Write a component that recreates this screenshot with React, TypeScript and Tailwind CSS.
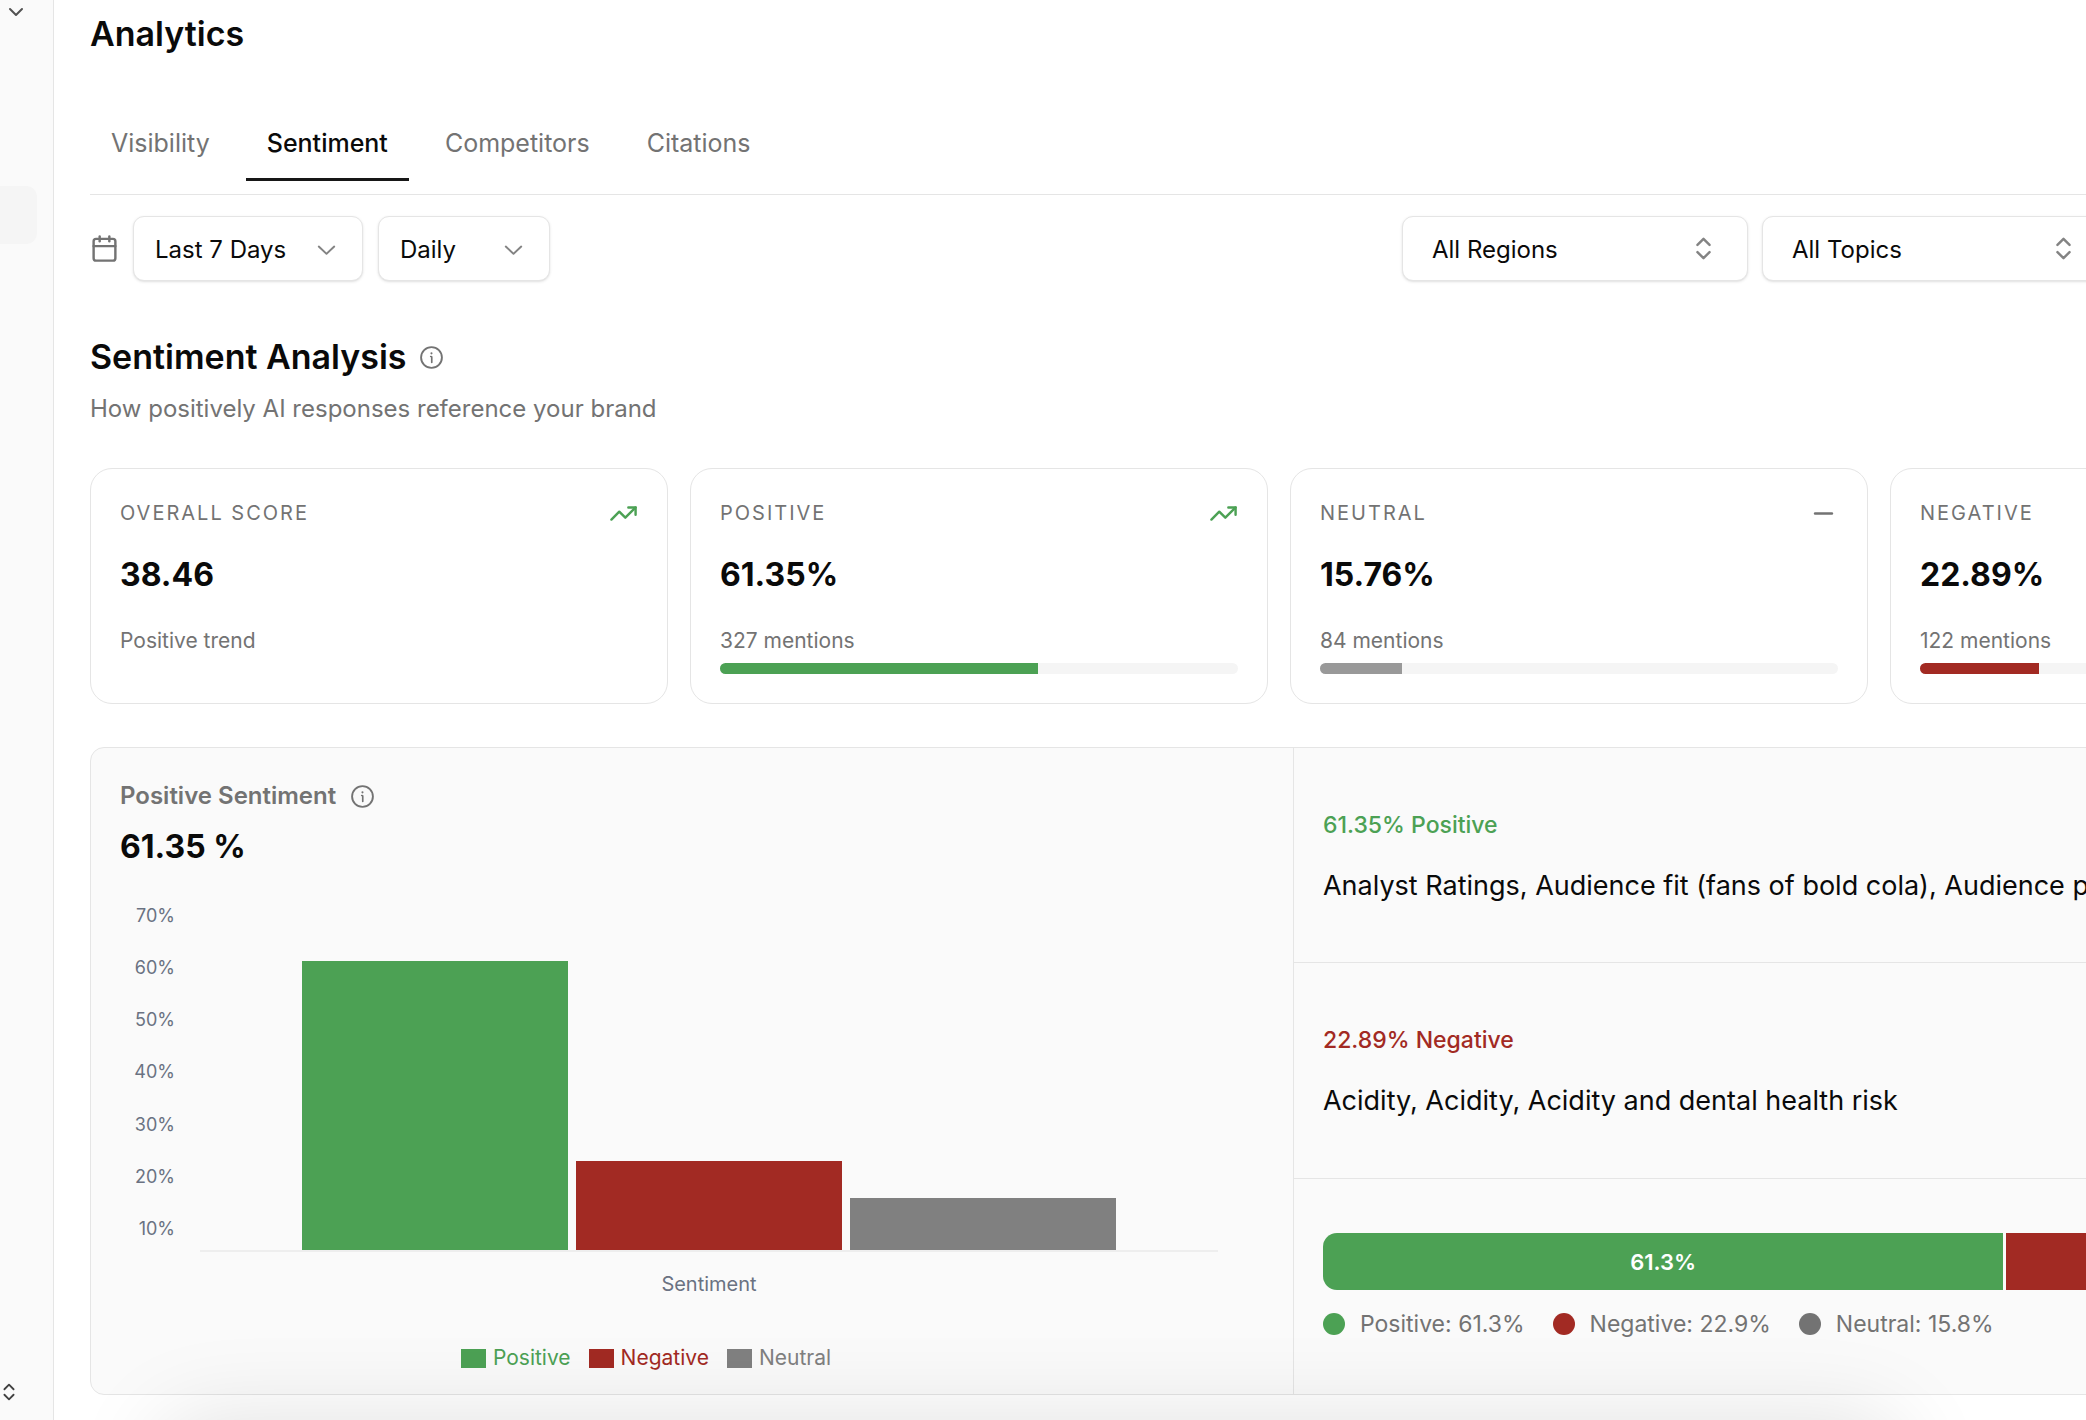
import React, { useState } from 'react';
import { Calendar, ChevronDown, ChevronsUpDown, Minus, TrendingUp } from 'lucide-react';

const TABS = ['Visibility', 'Sentiment', 'Competitors', 'Citations'];
const TICKS = ['70%', '60%', '50%', '40%', '30%', '20%', '10%'];

// the y axis starts a little above zero
const AXIS_MIN = 5.75;
const AXIS_MAX = 70;

type Series = {
  name: string;
  value: number;
  short: string;
  bg: string;
  text: string;
};

const SERIES: Series[] = [
  { name: 'Positive', value: 61.35, short: '61.3%', bg: 'bg-[#4ca154]', text: 'text-[#4ca154]' },
  { name: 'Negative', value: 22.89, short: '22.9%', bg: 'bg-[#a22a23]', text: 'text-[#a22a23]' },
  { name: 'Neutral', value: 15.76, short: '15.8%', bg: 'bg-[#808080]', text: 'text-[#808080]' },
];

function InfoIcon() {
  return (
    <svg
      viewBox="0 0 24 24"
      className="size-[25px] text-[#737373]"
      fill="none"
      stroke="currentColor"
      strokeLinecap="round"
      strokeLinejoin="round"
    >
      <circle cx="12" cy="12" r="10" strokeWidth="1.8" />
      <path d="M12.24 16.8V12c0-.47 0-.7-.15-.85-.14-.15-.38-.15-.85-.15" strokeWidth="1.6" />
      <path d="M11.99 8H12" strokeWidth="2" />
    </svg>
  );
}

function SmallChevron() {
  return (
    <svg viewBox="0 0 15 15" className="pointer-events-none absolute right-[22px] size-[29px] opacity-50" fill="currentColor">
      <path d="M3.135 6.158a.5.5 0 0 1 .707-.023L7.5 9.565l3.658-3.43a.5.5 0 0 1 .684.73l-4 3.75a.5.5 0 0 1-.684 0l-4-3.75a.5.5 0 0 1-.023-.707Z" />
    </svg>
  );
}

function PeriodSelect({ label, options, className }: { label: string; options: string[]; className: string }) {
  return (
    <div className={`relative flex items-center ${className}`}>
      <select
        aria-label={label}
        className="h-[65px] w-full appearance-none rounded-[11px] border border-neutral-200 bg-white pt-0.5 pl-[21px] text-2xl shadow-sm"
      >
        {options.map((o) => (
          <option key={o}>{o}</option>
        ))}
      </select>
      <SmallChevron />
    </div>
  );
}

function FilterSelect({ label }: { label: string }) {
  return (
    <div className="relative flex items-center">
      <select
        aria-label={label}
        className="h-[65px] w-full appearance-none rounded-[11px] border border-neutral-200 bg-white pt-0.5 pl-[29px] text-2xl shadow-sm"
      >
        <option>{label}</option>
      </select>
      <ChevronsUpDown className="pointer-events-none absolute right-[30px] size-[29px] opacity-50" />
    </div>
  );
}

type CardProps = {
  title: string;
  value: string;
  note: string;
  icon: React.ReactNode;
  percent?: number;
  bar?: string;
};

function StatCard({ title, value, note, icon, percent, bar }: CardProps) {
  return (
    <div className="h-[236px] rounded-[22px] border border-neutral-200 bg-white px-[29px] pt-7">
      <div className="flex h-8 items-center justify-between">
        <h3 className="text-xl tracking-widest text-[#737373] uppercase">{title}</h3>
        {icon}
      </div>
      <p className="mt-6 text-[32px] leading-11 font-bold">{value}</p>
      <p className="mt-7 text-[21px] leading-8 text-[#737373]">{note}</p>
      {percent !== undefined && (
        <div className="mt-[6px] h-[11px] overflow-hidden rounded-full bg-neutral-100">
          <div className={`h-full ${bar}`} style={{ width: `${percent}%` }} />
        </div>
      )}
    </div>
  );
}

function BarChart() {
  return (
    <div className="mt-[47px] pr-[46px]">
      <div className="flex">
        <div className="-mt-[14px] flex h-[341px] w-[55px] flex-col justify-between text-right text-lg leading-7 text-gray-500">
          {TICKS.map((t) => (
            <span key={t}>{t}</span>
          ))}
        </div>
        <div className="ml-[25px] h-[336px] flex-1 border-b-2 border-[#eeeeee]">
          <div className="mx-auto flex h-full w-4/5 items-end gap-2">
            {SERIES.map((s) => (
              <div
                key={s.name}
                className={`flex-1 ${s.bg}`}
                style={{ height: `${((s.value - AXIS_MIN) / (AXIS_MAX - AXIS_MIN)) * 100}%` }}
              />
            ))}
          </div>
        </div>
      </div>
      <p className="mt-[18px] ml-20 text-center text-xl leading-7 text-gray-500">Sentiment</p>
    </div>
  );
}

export default function App() {
  const [tab, setTab] = useState('Sentiment');

  return (
    <div className="relative flex h-screen overflow-hidden bg-white font-['Inter',sans-serif] text-[#0a0a0a]">
      <aside className="flex w-[54px] shrink-0 flex-col items-start border-r border-neutral-200 bg-neutral-50">
        <button aria-label="Switch workspace" className="ml-1 text-[#525252]">
          <ChevronDown className="size-6" />
        </button>
        <button aria-label="Analytics" className="mt-[162px] h-[58px] w-[37px] rounded-r-[11px] bg-neutral-100" />
        <button aria-label="Account menu" className="mt-auto mb-[17px] -ml-[2px] text-[#404040]">
          <ChevronsUpDown className="size-[22px]" />
        </button>
      </aside>

      <main className="min-w-[2450px] px-9">
        <h1 className="pt-3 text-[34px] leading-11 font-semibold">Analytics</h1>

        <nav className="mt-[52px] flex gap-[15px] border-b border-neutral-200 pb-[13px]">
          {TABS.map((t) => (
            <button
              key={t}
              onClick={() => setTab(t)}
              className={`h-[73px] border-b-3 px-[21px] pt-0.5 text-[25px] ${
                tab === t ? 'border-[#171717] font-medium' : 'border-transparent text-[#737373]'
              }`}
            >
              {t}
            </button>
          ))}
        </nav>

        <div className="mt-[21px] flex items-center">
          <Calendar className="size-[29px] text-[#737373]" />
          <PeriodSelect label="Date range" options={['Last 7 Days', 'Last 30 Days']} className="ml-[14px] w-[230px]" />
          <PeriodSelect label="Interval" options={['Daily', 'Weekly']} className="ml-[15px] w-[172px]" />
          <div className="ml-auto grid w-[1066px] grid-cols-3 gap-[14px]">
            <FilterSelect label="All Regions" />
            <FilterSelect label="All Topics" />
          </div>
        </div>

        <div className="mt-[54px] flex items-center gap-3">
          <h2 className="text-[34px] leading-11 font-semibold">Sentiment Analysis</h2>
          <InfoIcon />
        </div>
        <p className="mt-3 text-2xl leading-9 text-[#737373]">How positively AI responses reference your brand</p>

        <section className="mt-[41px] grid grid-cols-4 gap-[22px]">
          <StatCard
            title="Overall Score"
            value="38.46"
            note="Positive trend"
            icon={<TrendingUp className="size-[29px] text-[#4ca154]" />}
          />
          <StatCard
            title="Positive"
            value="61.35%"
            note="327 mentions"
            icon={<TrendingUp className="size-[29px] text-[#4ca154]" />}
            percent={61.35}
            bar="bg-[#4ca154]"
          />
          <StatCard
            title="Neutral"
            value="15.76%"
            note="84 mentions"
            icon={<Minus className="size-[29px] text-[#737373]" />}
            percent={15.76}
            bar="bg-[#999999]"
          />
          <StatCard title="Negative" value="22.89%" note="122 mentions" icon={null} percent={22.89} bar="bg-[#a22a23]" />
        </section>

        <section className="mt-[43px] grid h-[648px] grid-cols-[1203fr_1175fr] rounded-[14px] border border-neutral-200 bg-neutral-50">
          <div className="flex flex-col px-[29px] pt-7">
            <div className="flex items-center gap-[14px]">
              <h3 className="text-2xl leading-10 font-semibold text-[#737373]">Positive Sentiment</h3>
              <InfoIcon />
            </div>
            <p className="mt-[9px] text-[32px] leading-11 font-bold">61.35 %</p>
            <BarChart />
            <ul className="mt-[44px] flex justify-center gap-[18px] pr-[92px] text-[21px] leading-8">
              {SERIES.map((s) => (
                <li key={s.name} className={`flex items-center gap-[7px] ${s.text}`}>
                  <span className={`h-[19px] w-[25px] ${s.bg}`} />
                  {s.name}
                </li>
              ))}
            </ul>
          </div>

          <div className="grid grid-rows-3 divide-y divide-neutral-200 border-l border-neutral-200">
            <div className="flex flex-col justify-center gap-[21px] overflow-hidden px-[29px]">
              <h4 className="text-[23px] leading-10 font-medium text-[#4ca154]">61.35% Positive</h4>
              <p className="text-[27px] leading-10 whitespace-nowrap">
                Analyst Ratings, Audience fit (fans of bold cola), Audience perception
              </p>
            </div>
            <div className="flex flex-col justify-center gap-[21px] px-[29px]">
              <h4 className="text-[23px] leading-10 font-medium text-[#a22a23]">22.89% Negative</h4>
              <p className="text-[27px] leading-10">Acidity, Acidity, Acidity and dental health risk</p>
            </div>
            <div className="flex flex-col justify-center gap-4 px-[29px] pt-0.5">
              <div className="flex h-[57px] gap-[3px] overflow-hidden rounded-[14px] text-[22px] font-semibold text-white">
                {SERIES.map((s) => (
                  <div
                    key={s.name}
                    className={`flex items-center justify-center pt-0.5 ${s.bg}`}
                    style={{ width: `${s.value}%` }}
                  >
                    {s.short}
                  </div>
                ))}
              </div>
              <ul className="flex gap-7 text-[23px] leading-9 text-[#737373]">
                {SERIES.map((s) => (
                  <li key={s.name} className="flex items-center gap-[15px]">
                    <span className={`size-[22px] rounded-full ${s.name === 'Neutral' ? 'bg-[#737373]' : s.bg}`} />
                    {s.name}: {s.short}
                  </li>
                ))}
              </ul>
            </div>
          </div>
        </section>
      </main>

      <div className="pointer-events-none absolute top-full right-[186px] left-[160px] h-40 rounded-[40px] shadow-[0_0_90px_rgba(0,0,0,0.125)]" />
    </div>
  );
}
